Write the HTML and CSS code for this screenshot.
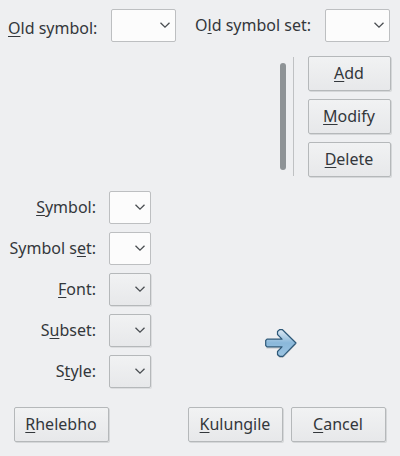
FILE: index.html
```
<!DOCTYPE html>
<html lang="zu">
<head>
<meta charset="utf-8">
<title>Symbols</title>
<link rel="stylesheet" href="styles.css">
</head>
<body>
<svg class="defs" width="0" height="0">
  <symbol id="chevron" viewBox="0 0 10 6"><path d="M.5 .7 5 5.1 9.5 .7" fill="none" stroke="#4a4e52" stroke-width="1.3"/></symbol>
</svg>
<main class="dialog">
  <header class="old">
    <label class="old-symbol"><u>O</u>ld symbol:</label>
    <div class="combo edit wide"><svg><use href="#chevron"/></svg></div>
    <label class="old-set">O<u>l</u>d symbol set:</label>
    <div class="combo edit wide"><svg><use href="#chevron"/></svg></div>
  </header>
  <section class="middle">
    <div class="scrollbar"></div>
    <div class="rule"></div>
    <div class="actions">
      <button><span><u>A</u>dd</span></button>
      <button><span><u>M</u>odify</span></button>
      <button><span><u>D</u>elete</span></button>
    </div>
  </section>
  <section class="details">
    <div class="form">
      <label><u>S</u>ymbol:</label><div class="combo edit"><svg><use href="#chevron"/></svg></div>
      <label>Symbol s<u>e</u>t:</label><div class="combo edit"><svg><use href="#chevron"/></svg></div>
      <label><u>F</u>ont:</label><div class="combo"><svg><use href="#chevron"/></svg></div>
      <label>S<u>u</u>bset:</label><div class="combo"><svg><use href="#chevron"/></svg></div>
      <label>S<u>t</u>yle:</label><div class="combo"><svg><use href="#chevron"/></svg></div>
    </div>
    <svg class="arrow" viewBox="0 0 32 30">
      <defs><linearGradient id="blue" x1="0" y1="0" x2="0" y2="1"><stop offset="0" stop-color="#dbe8f3"/><stop offset=".5" stop-color="#8ab8da"/><stop offset="1" stop-color="#9cc4e2"/></linearGradient></defs>
      <path class="shade" d="M1.500 19H16.500L12.500 23V26.500L15 28.500H18L31 15"/>
      <path class="body" d="M2 10.200H17L12.500 5.500V2.500L14.500 .7H17.500L31 14 18 27.300H14.500L12.500 25.500V22.500L17 17.800H2L.7 16.500V11.500Z"/>
    </svg>
  </section>
  <footer class="footer">
    <button class="reset"><span><u>R</u>helebho</span></button>
    <button><span><u>K</u>ulungile</span></button>
    <button><span><u>C</u>ancel</span></button>
  </footer>
</main>
</body>
</html>
```
FILE: styles.css
```
* { box-sizing: border-box; }
body {
  margin: 0;
  background: #eeeff1;
  color: #33373b;
  font: 16px/22px "Noto Sans", sans-serif;
}
.defs { position: absolute; }
.dialog { width: 400px; height: 456px; overflow: hidden; padding-top: 9px; }
u {
  text-decoration: underline 1px;
  text-underline-offset: 2px;
  text-decoration-skip-ink: none;
}
label { white-space: nowrap; }
.old {
  display: grid;
  grid-template-columns: 103px 65px 149px 65px;
  padding-left: 8px;
  height: 47px;
}
.old-symbol { padding-top: 8px; }
.old-set { padding: 5px 0 0 19px; }
.combo {
  width: 42px;
  height: 33px;
  border: 1px solid #b5b8ba;
  border-radius: 2px;
  background: linear-gradient(#f1f2f3, #e7e8ea);
  box-shadow: 1px 1px 0 #dcdddf;
  display: flex;
  justify-content: flex-end;
  padding: 12px 5px 0 0;
}
.combo.wide { width: 65px; }
.combo.edit { background: #fcfcfc; border-color: #bdbfc1; box-shadow: none; }
.combo svg { width: 10px; height: 6px; }
.middle { display: flex; padding-left: 280px; height: 135px; }
.scrollbar { width: 6px; height: 107px; margin-top: 7px; border-radius: 3px; background: #8e9396; }
.rule { width: 1px; height: 119px; margin: 1px 14px 0 7px; background: #bfc1c3; }
.actions { display: flex; flex-direction: column; gap: 8px; width: 83px; }
button {
  display: block;
  width: 100%;
  height: 35px;
  padding: 0 1px 2px 0;
  border: 1px solid #b5b8ba;
  border-radius: 2px;
  background: linear-gradient(#f1f2f3, #e7e8ea);
  box-shadow: 1px 1px 0 #d5d7d9;
  color: inherit;
  font: inherit;
}
.details { display: flex; height: 216px; }
.form {
  display: grid;
  grid-template-columns: 96px 42px;
  grid-auto-rows: 33px;
  gap: 8px 13px;
  text-align: right;
}
.form label { padding-top: 5px; }
.arrow { width: 32px; height: 30px; margin: 138px 0 0 114px; }
.arrow .shade { fill: none; stroke: #8f969c; stroke-width: 1; opacity: .5; }
.arrow .body { fill: url(#blue); stroke: #2d5878; stroke-width: 1.2; stroke-linejoin: round; }
.footer { display: flex; gap: 8px; padding-left: 14px; }
.footer button { width: 95px; }
.footer .reset { margin-right: 71px; }
```
